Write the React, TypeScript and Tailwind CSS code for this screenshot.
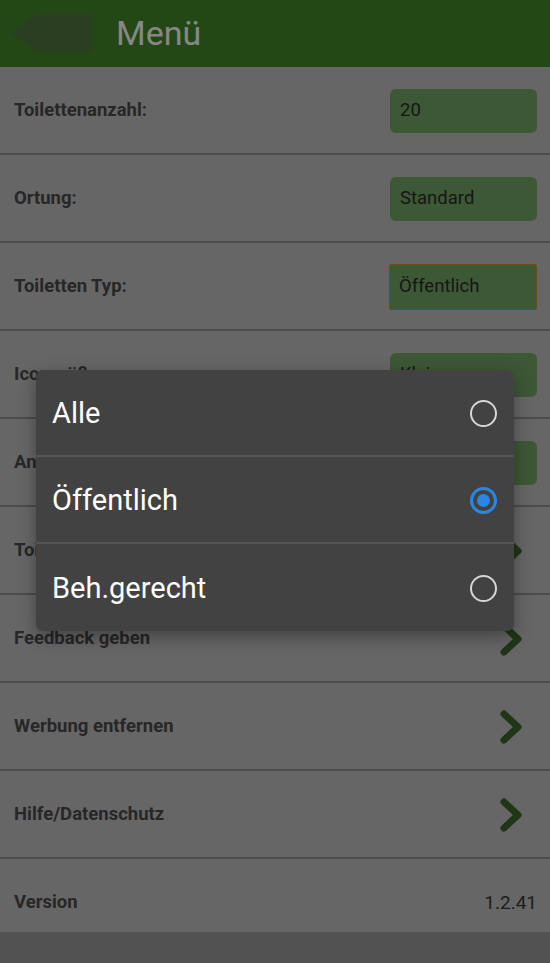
import type { ReactNode } from "react";

const FONT = { fontFamily: "Roboto, 'Noto Sans', 'Liberation Sans', sans-serif" };

const LABEL = "text-[18.5px] font-bold text-[#272727]";
const ROW = "flex h-[88px] items-center justify-between border-b-2 border-[#4c4c4c] pl-[14px] pr-[13px] pt-[2px]";

function Field({ value, focused }: { value: string; focused?: boolean }) {
  return (
    <div
      className={
        focused
          ? "flex h-[46px] w-[148px] items-center rounded-[2px] border border-[#6e4c14] bg-[#3d5834] pl-[9px] text-[18.5px] text-[#161616]"
          : "flex h-[44px] w-[147px] items-center rounded-[6px] bg-[#3d5834] pl-[10px] text-[18.5px] text-[#161616]"
      }
    >
      {value}
    </div>
  );
}

function Chevron() {
  return (
    <svg width="26" height="34" viewBox="0 0 26 34" className="mr-[12px]">
      <path
        d="M5 4 L19 17 L5 30"
        fill="none"
        stroke="#1f3617"
        strokeWidth="7"
        strokeLinecap="round"
        strokeLinejoin="round"
      />
    </svg>
  );
}

function Row({ label, right }: { label: string; right?: ReactNode }) {
  return (
    <div className={ROW}>
      <span className={LABEL}>{label}</span>
      {right}
    </div>
  );
}

function Radio({ checked }: { checked?: boolean }) {
  if (checked) {
    return (
      <span className="flex h-[27px] w-[27px] items-center justify-center rounded-full border-[3px] border-[#2a86e4]">
        <span className="h-[13px] w-[13px] rounded-full bg-[#2a86e4]" />
      </span>
    );
  }
  return <span className="h-[27px] w-[27px] rounded-full border-[2.5px] border-[#d6d6d6]" />;
}

const OPTIONS = [
  { label: "Alle", checked: false },
  { label: "Öffentlich", checked: true },
  { label: "Beh.gerecht", checked: false },
];

export default function App() {
  return (
    <div className="relative flex h-[963px] w-[550px] flex-col overflow-hidden bg-[#525252]" style={FONT}>
      <header className="flex h-[67px] shrink-0 items-center bg-[#244716]">
        <svg width="92" height="40" viewBox="0 0 92 40" className="ml-[10px] shrink-0">
          <polygon points="0,19 27,0 82,0 82,38 27,38" fill="#2a3f22" />
        </svg>
        <h1 className="ml-[14px] text-[34px] font-normal text-[#878787]">Menü</h1>
      </header>

      <div className="flex flex-col bg-[#666666]">
        <Row label="Toilettenanzahl:" right={<Field value="20" />} />
        <Row label="Ortung:" right={<Field value="Standard" />} />
        <Row label="Toiletten Typ:" right={<Field value="Öffentlich" focused />} />
        <Row label="Icongröße:" right={<Field value="Klein" />} />
        <Row label="Anzeige:" right={<Field value="Karte" />} />
        <Row label="Toilette melden" right={<Chevron />} />
        <Row label="Feedback geben" right={<Chevron />} />
        <Row label="Werbung entfernen" right={<Chevron />} />
        <Row label="Hilfe/Datenschutz" right={<Chevron />} />
        <div className="flex h-[73px] items-center justify-between pl-[14px] pr-[13px] pt-[15px]">
          <span className={LABEL}>Version</span>
          <span className="text-[19px] text-[#1c1c1c]">1.2.41</span>
        </div>
      </div>

      {/* dialog */}
      <div className="absolute left-[36px] top-[370px] w-[478px] overflow-hidden rounded-[7px] bg-[#424242] shadow-[0_6px_18px_rgba(0,0,0,0.35)]">
        {OPTIONS.map((o, i) => (
          <div
            key={o.label}
            className={
              "flex h-[87px] items-center justify-between pl-[16px] pr-[17px] pt-[2px] " +
              (i < OPTIONS.length - 1 ? "border-b-2 border-[#555555]" : "")
            }
          >
            <span className="text-[29px] text-white">{o.label}</span>
            <Radio checked={o.checked} />
          </div>
        ))}
      </div>
    </div>
  );
}
